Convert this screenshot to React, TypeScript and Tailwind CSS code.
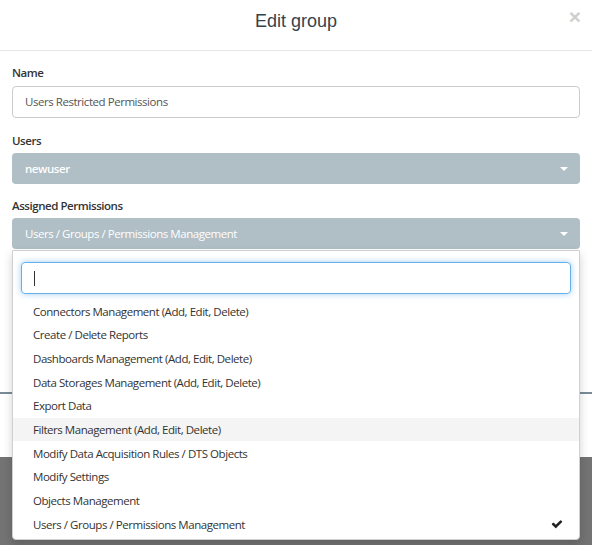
const permissions = [
  "Connectors Management (Add, Edit, Delete)",
  "Create / Delete Reports",
  "Dashboards Management (Add, Edit, Delete)",
  "Data Storages Management (Add, Edit, Delete)",
  "Export Data",
  "Filters Management (Add, Edit, Delete)",
  "Modify Data Acquisition Rules / DTS Objects",
  "Modify Settings",
  "Objects Management",
  "Users / Groups / Permissions Management",
];

const selected = "Users / Groups / Permissions Management";
const hovered = "Filters Management (Add, Edit, Delete)";

function Caret() {
  return <span className="h-0 w-0 border-x-[4px] border-t-[4px] border-x-transparent border-t-white" />;
}

function CheckIcon() {
  return (
    <svg viewBox="0 0 1792 1792" className="h-[12px] w-[12px] fill-[#222]">
      <path d="M1671 566q0 40-28 68l-724 724-136 136q-28 28-68 28t-68-28l-136-136-362-362q-28-28-28-68t28-68l136-136q28-28 68-28t68 28l294 295 656-657q28-28 68-28t68 28l136 136q28 28 28 68z" />
    </svg>
  );
}

export default function App() {
  return (
    <div className="relative h-[545px] w-[592px] overflow-hidden bg-[#737373] font-['Open_Sans',_sans-serif] text-[11.5px] tracking-[-0.45px] text-[#333]">
      <div className="flex h-[457px] flex-col bg-white">
        {/* header */}
        <div className="relative h-[51px] border-b border-[#e5e5e5] pt-[10px] text-center tracking-normal">
          <h2 className="font-['Liberation_Sans',_sans-serif] text-[18px] leading-[22px] text-[#34424d]">Edit group</h2>
          <button
            type="button"
            className="absolute right-[11px] top-[5px] font-['Liberation_Sans',_sans-serif] text-[21px] font-bold leading-[24px] text-[#cfcfcf]"
          >
            ×
          </button>
        </div>

        {/* body */}
        <div className="flex flex-col px-3 pt-[13px]">
          <label className="mb-[4px] block font-semibold leading-[18px]">Name</label>
          <div className="flex h-[32px] items-center rounded border border-[#ccc] px-3 text-[#555]">
            Users Restricted Permissions
          </div>

          <label className="mb-[3px] mt-[14px] block font-semibold leading-[18px]">Users</label>
          <div className="flex h-[31px] items-center justify-between rounded bg-[#b0bec5] pl-[13px] pr-[12px] text-white">
            <span className="font-semibold">newuser</span>
            <Caret />
          </div>

          <label className="mb-[3px] mt-[13px] block font-semibold leading-[18px]">Assigned Permissions</label>
          <div className="relative z-10">
            <div className="flex h-[31px] items-center justify-between rounded bg-[#b0bec5] pl-[13px] pr-[12px] text-white">
              <span>Users / Groups / Permissions Management</span>
              <Caret />
            </div>

            {/* open dropdown */}
            <div className="absolute left-0 right-0 top-[32px] rounded-b border border-[#d0d0d0] bg-white pb-[3px] pt-[11px] shadow-[0_4px_10px_rgba(0,0,0,0.18)]">
              <div className="mx-2 flex h-[32px] items-center rounded border border-[#66afe9] px-3 shadow-[0_0_6px_rgba(102,175,233,0.6)]">
                <span className="h-[15px] w-px bg-[#333]" />
              </div>
              <ul className="mt-[5.5px]">
                {permissions.map((p) => (
                  <li
                    key={p}
                    className={`flex h-[23.67px] items-center justify-between pl-[20px] pr-[16px] ${
                      p === hovered ? "bg-[#f4f4f4]" : ""
                    }`}
                  >
                    <span>{p}</span>
                    {p === selected && <CheckIcon />}
                  </li>
                ))}
              </ul>
            </div>
          </div>

          {/* fields hidden behind the dropdown */}
          <div className="mt-[34px] h-[27px] border-x border-[#93a4ac]" />
          <div className="h-[50px] border-l border-[#93a4ac]" />
        </div>

        {/* footer */}
        <div className="mt-[32px] flex flex-1 justify-end border-t-2 border-[#7a8c97] pr-[12px] pt-[18px]">
          <div className="h-[29px] w-px bg-[#3c8dbc]" />
        </div>
      </div>
    </div>
  );
}
